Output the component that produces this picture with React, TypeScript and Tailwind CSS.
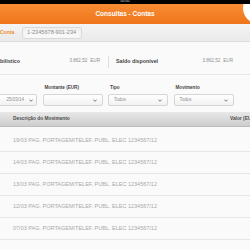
const movimentos = ['19/03', '14/03', '13/03', '12/03', '07/03'];

const Chevron = () => (
  <svg width="4" height="3" viewBox="0 0 4 3" className="shrink-0">
    <path d="M0.4 0.6 L2 2.3 L3.6 0.6" fill="none" stroke="#6b6b6b" strokeWidth="0.9" />
  </svg>
);

const App = () => {
  const filtros = [
    { label: '', value: '25/03/14', pad: 'justify-end gap-[5px] pr-[3px]' },
    { label: 'Montante (EUR)', value: '', pad: 'justify-end pr-[5px]' },
    { label: 'Tipo', value: 'Todos', pad: 'justify-between px-[5px]' },
    { label: 'Movimento', value: 'Todos', pad: 'justify-between px-[5px]' },
  ];

  return (
    <div className="relative w-[250px] h-[250px] overflow-hidden bg-[#fafafa] font-['Liberation_Sans',Arial,sans-serif]">
      {/* status bar */}
      <div className="h-[4px] bg-black flex items-center justify-center">
        <span className="text-[3.5px] leading-none text-[#dddddd]">00:00</span>
      </div>

      {/* header */}
      <header className="relative h-[20px] bg-linear-to-b from-[#f78d33] to-[#ef7419] flex items-center justify-center overflow-hidden">
        <h1 className="text-[6.5px] font-bold leading-none text-white">Consultas - Contas</h1>
        <div className="absolute left-[243px] -top-[12px] w-[32px] h-[32px] rounded-full bg-white" />
      </header>

      {/* conta */}
      <div className="h-[18px] flex items-center bg-linear-to-b from-[#f4f4f4] to-[#eaeaea] border-b border-[#dddddd]">
        <span className="w-[22px] text-[5px] font-bold leading-none text-[#f08a2c]">Conta</span>
        <div className="w-[60px] h-[12px] flex items-center pl-[4px] rounded-[2px] border border-[#d9d9d9] bg-[#f8f8f8] shadow-inner">
          <span className="text-[5.6px] leading-none text-[#8c8c8c]">1-2345678-901-234</span>
        </div>
      </div>

      {/* saldos */}
      <div className="h-[33px] pt-[7px] flex items-center border-b border-[#e8e8e8]">
        <div className="w-[108px] flex items-center justify-between pr-[8px]">
          <span className="-ml-[30px] text-[5.3px] font-bold leading-none text-[#444444]">Saldo contabilístico</span>
          <span className="text-[4.6px] leading-none text-[#8e8e8e] flex gap-[3px]">
            <span>3.862,52</span>
            <span>EUR</span>
          </span>
        </div>
        <div className="w-px h-[12px] bg-[#dedede]" />
        <div className="flex-1 flex items-center justify-between pl-[7px] pr-[17px]">
          <span className="text-[5.3px] font-bold leading-none text-[#444444]">Saldo disponível</span>
          <span className="text-[4.6px] leading-none text-[#8e8e8e] flex gap-[3px]">
            <span>3.862,52</span>
            <span>EUR</span>
          </span>
        </div>
      </div>

      {/* filtros */}
      <div className="pt-[10px] pb-[6px] flex gap-[5.5px] -ml-[23px]">
        {filtros.map((f, i) => (
          <div key={i} className="w-[60px] shrink-0 flex flex-col gap-[2px]">
            <span className="h-[7px] pl-[2px] flex items-center text-[4.6px] font-bold leading-none text-[#474747]">
              {f.label}
            </span>
            <div className={`h-[12px] flex items-center rounded-[2px] border border-[#d6d6d6] bg-linear-to-b from-white to-[#f1f1f1] ${f.pad}`}>
              {f.value && <span className="text-[4.5px] leading-none text-[#8e8e8e]">{f.value}</span>}
              <Chevron />
            </div>
          </div>
        ))}
      </div>

      {/* tabela */}
      <div className="h-[15px] flex items-center bg-linear-to-b from-[#e8e8e8] to-[#cdcdcd] border-b border-[#bdbdbd]">
        <span className="w-[230px] shrink-0 pl-[13px] text-[4.8px] font-bold leading-none text-[#4d4d4d]">Descrição do Movimento</span>
        <span className="whitespace-nowrap text-[4.8px] font-bold leading-none text-[#4d4d4d]">Valor (EUR)</span>
      </div>

      <div className="mt-[3px]">
        {movimentos.map((d) => (
          <div key={d} className="h-[22px] flex items-center pl-[13px] border-b border-[#e6e6e6]">
            <span className="text-[5.5px] leading-none text-[#a9a9a9] whitespace-nowrap">
              {d} PAG. PORTAGEM/TELEF. PUBL. ELEC 1234567/12
            </span>
          </div>
        ))}
      </div>
    </div>
  );
};

export default App;
